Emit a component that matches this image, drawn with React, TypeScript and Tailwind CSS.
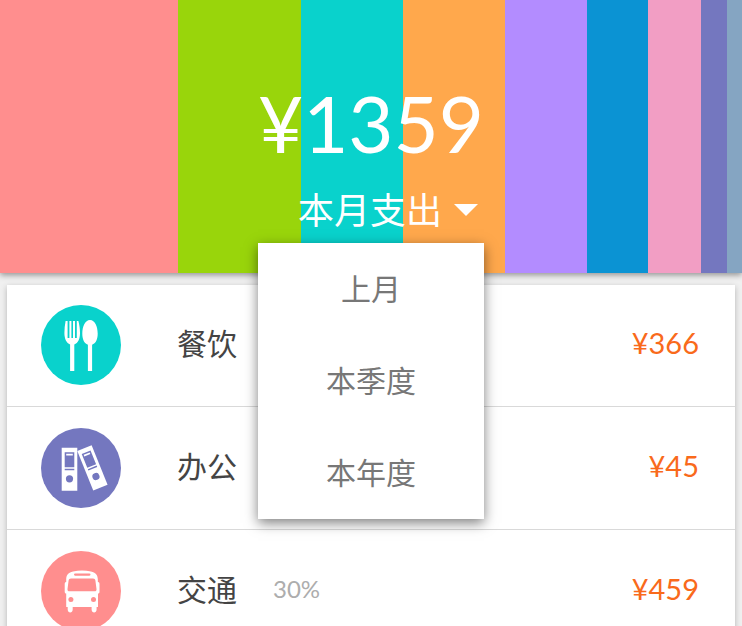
import { useState, type ReactNode } from "react";

const segments = [
  { color: "bg-[#ff8e8e]", share: 178 },
  { color: "bg-[#99d50b]", share: 123 },
  { color: "bg-[#09d2cc]", share: 102 },
  { color: "bg-[#ffa84c]", share: 102 },
  { color: "bg-[#b38cff]", share: 82 },
  { color: "bg-[#0b93d3]", share: 61 },
  { color: "bg-[#f29ec4]", share: 53 },
  { color: "bg-[#7477bf]", share: 26 },
  { color: "bg-[#85a5c2]", share: 15 },
];

const periods = ["上月", "本季度", "本年度"];

function CutleryIcon() {
  return (
    <svg viewBox="0 0 80 80" className="size-20" aria-hidden="true">
      <path
        fill="#fff"
        d="M24.6 16h2v17h1.8V16h2v17h1.6V16h2v17h1.8V16h1.6c1 4 1.6 8 1.6 12 0 6-2 10-5.7 11.5V66h-4.2V39.500C25.500 38 23.400 34 23.400 28c0-4 .4-8 1.200-12Z"
      />
      <path
        fill="#fff"
        d="M49 15c5 0 7.700 6.500 7.700 13.500 0 6-2 10-5.600 11.200V66h-4.200V39.700c-3.600-1.200-5.600-5.200-5.600-11.200C41.300 21.500 44 15 49 15Z"
      />
    </svg>
  );
}

function Binder() {
  return (
    <>
      <path fill="#fff" d="M0 0h15.600v43H0Z" />
      <path fill="#7477bf" d="M3 4.500h9.600v15H3ZM3 21h9.600v1.500H3Z" />
      <path fill="#fff" d="M4.500 6h6.600v1.700H4.500Z" />
      <circle cx="7.800" cy="31" r="3.600" fill="#7477bf" />
    </>
  );
}

function BindersIcon() {
  return (
    <svg viewBox="0 0 80 80" className="size-20" aria-hidden="true">
      <g transform="translate(20.700 19.800)">
        <Binder />
      </g>
      <g transform="translate(36.300 23) rotate(-22) scale(.99)">
        <Binder />
      </g>
    </svg>
  );
}

function BusIcon() {
  return (
    <svg viewBox="0 0 80 80" className="size-20" aria-hidden="true">
      <path
        fill="#fff"
        d="M32 20.500c6-1.400 12-1.400 18 0 4.500 1 6.500 3 6.800 7.500l.1 3c1.500.2 1.600 1 1.600 2.500v7c0 1.500-.5 2-1.500 2V56h-1.400v2.500c0 4-5 4-5 0V56H31.700v2.500c0 4-5 4-5 0V56h-1.500V42.500c-1 0-1.500-.5-1.500-2v-7c0-1.500.1-2.300 1.500-2.500v-3c.3-4.500 2.300-6.500 6.800-7.500Z"
      />
      <rect x="33" y="22.500" width="16.500" height="2.200" rx="1.100" fill="#ff8e8e" />
      <path
        fill="#ff8e8e"
        d="M30 27.500h22c1.500 0 2.200.7 2.400 2l1.100 8.500c.2 1.500-.5 2.300-2 2.300h-25c-1.500 0-2.200-.8-2-2.300l1.100-8.500c.2-1.300.9-2 2.400-2Z"
      />
      <circle cx="29.900" cy="48.500" r="2.500" fill="#ff8e8e" />
      <circle cx="52.500" cy="48.500" r="2.500" fill="#ff8e8e" />
    </svg>
  );
}

type Expense = {
  name: string;
  amount: string;
  percent?: string;
  color: string;
  icon: ReactNode;
};

const expenses: Expense[] = [
  { name: "餐饮", amount: "¥366", color: "bg-[#09d2cc]", icon: <CutleryIcon /> },
  { name: "办公", amount: "¥45", color: "bg-[#7477bf]", icon: <BindersIcon /> },
  { name: "交通", amount: "¥459", percent: "30%", color: "bg-[#ff8e8e]", icon: <BusIcon /> },
];

function ExpenseRow({ name, amount, percent, color, icon }: Expense) {
  return (
    <li className="flex items-center border-b border-[#d9d9d9] py-[21px] pr-9 pl-[34px] first:pt-5">
      <span className={`size-20 shrink-0 overflow-hidden rounded-full ${color}`}>{icon}</span>
      <span className="ml-14 pb-1 text-[30px] leading-10 text-[#444]">{name}</span>
      {percent && <span className="ml-9 pb-1 text-[24px] leading-10 text-[#adadad]">{percent}</span>}
      <span className="ml-auto pb-1 text-[29px] leading-10 text-[#f96a1b]">{amount}</span>
    </li>
  );
}

export default function App() {
  const [open, setOpen] = useState(true);

  return (
    <main className="h-screen overflow-hidden bg-[#f0f0f0] font-['Lato','Noto_Sans_CJK_SC',sans-serif]">
      <header className="relative z-10 grid h-[273px] shadow-[0_2px_6px_rgba(0,0,0,0.4)]">
        <div className="col-start-1 row-start-1 flex" aria-hidden="true">
          {segments.map((s) => (
            <div key={s.color} className={`basis-0 ${s.color}`} style={{ flexGrow: s.share }} />
          ))}
        </div>
        <div className="relative col-start-1 row-start-1 flex flex-col items-end justify-self-center pt-[78px] text-white">
          <h1 className="text-[78px] leading-[90px]">¥1359</h1>
          <button
            type="button"
            aria-haspopup="menu"
            aria-expanded={open}
            onClick={() => setOpen(!open)}
            className="mt-4 mr-1.5 flex items-center gap-3 text-[36px] leading-[52px]"
          >
            本月支出
            <svg viewBox="0 0 24 12" className="h-3 w-6" aria-hidden="true">
              <path d="M0 0h24L12 12Z" fill="currentColor" />
            </svg>
          </button>
          {open && (
            <div
              role="menu"
              className="absolute top-[243px] left-1/2 w-[226px] -translate-x-1/2 bg-white shadow-[0_4px_12px_rgba(0,0,0,0.5)]"
            >
              {periods.map((period) => (
                <button
                  key={period}
                  type="button"
                  role="menuitem"
                  onClick={() => setOpen(false)}
                  className="block h-[92px] w-full pb-0.5 text-center text-[30px] text-[#777]"
                >
                  {period}
                </button>
              ))}
            </div>
          )}
        </div>
      </header>
      <ul className="mx-[7px] mt-3 bg-white shadow-[0_2px_6px_rgba(0,0,0,0.25)]">
        {expenses.map((e) => (
          <ExpenseRow key={e.name} {...e} />
        ))}
      </ul>
    </main>
  );
}
